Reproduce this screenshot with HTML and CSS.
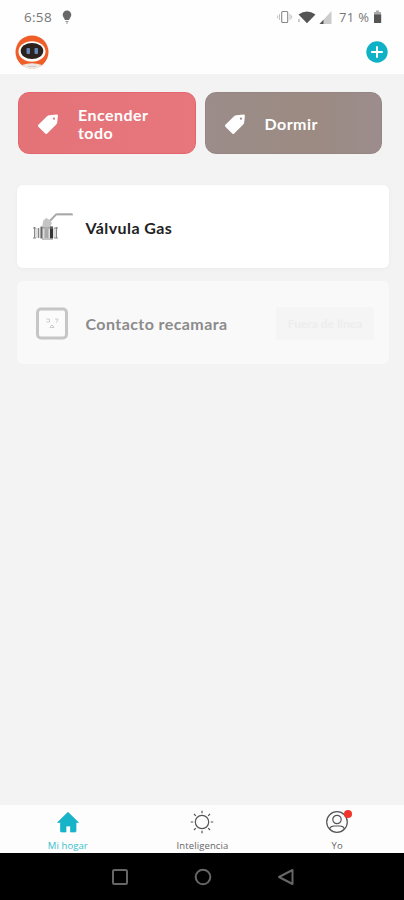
FILE: index.html
```
<!DOCTYPE html>
<html lang="es">
<head>
<meta charset="utf-8">
<meta name="viewport" content="width=device-width, initial-scale=1">
<title>Mi hogar</title>
<link rel="stylesheet" href="styles.css">
</head>
<body>
<div class="app">
  <header class="top">
    <div class="status">
      <span class="clock">6:58</span>
      <svg class="bulb" width="10" height="15" viewBox="0 0 10 15"><path d="M5 .5a4.300 4.300 0 0 1 4.300 4.300C9.300 7 7.500 8.300 7.100 10H2.900C2.500 8.300.7 7 .7 4.800A4.300 4.300 0 0 1 5 .5z" fill="#686868"/><path d="M3.500 11.500h3M4 13h2" stroke="#999"/></svg>
      <svg class="signals" width="56" height="16" viewBox="0 0 56 16">
        <rect x="4.700" y="2.500" width="6" height="11" rx="1" fill="none" stroke="#888" stroke-width="1.100"/>
        <path d="M2.500 5v6M.7 6.500v3M13 5v6M14.600 6.500v3" stroke="#bbb" stroke-width=".9"/>
        <path d="M21.500 5.500Q30 -.5 38.500 5.500L30 14.200z" fill="#555"/>
        <path d="M22 10v3" stroke="#999"/>
        <path d="M54.500 2v13h-12z" fill="#ccc"/><path d="M46.500 10.700V15h-4z" fill="#555"/>
      </svg>
      <span class="percent">71 %</span>
      <svg class="battery" width="9" height="14" viewBox="0 0 9 14"><path d="M3 .5h3V2h2v3H1V2h2z" fill="#aaa"/><path d="M1 4.500h7.200V13H1z" fill="#555"/></svg>
    </div>
    <div class="bar">
      <svg class="avatar" width="34" height="34" viewBox="0 0 34 34">
        <circle cx="17" cy="17" r="16.500" fill="#ef5d28"/>
        <path d="M7 30Q17 26.500 27 30Q23 34 17 34Q11 34 7 30z" fill="#eee5df"/>
        <ellipse cx="17" cy="16.500" rx="13.500" ry="10.300" fill="#fff"/>
        <ellipse cx="17" cy="16" rx="11.300" ry="8" fill="#2b211d"/>
        <rect x="11.500" y="13" width="3.500" height="6" rx="1" fill="#6687b5"/><rect x="19.500" y="13" width="3.500" height="6" rx="1" fill="#6687b5"/>
        <path d="M13 31.500h8" stroke="#ccc"/>
      </svg>
      <svg class="add" width="22" height="22" viewBox="0 0 22 22"><circle cx="11" cy="11" r="10.700" fill="#0eb1c6"/><path d="M11 5.200v11.600M5.200 11h11.600" stroke="#fff" stroke-width="1.900"/></svg>
    </div>
  </header>
  <main class="content">
    <section class="scenes">
      <div class="scene red">
        <svg class="tag" width="22" height="21" viewBox="0 0 22 21"><path d="M1.400 10.800L10 2.300Q11 1.300 12.500 1.200L19.500.6Q21 .5 20.900 2L20.200 8.200Q20 9.700 19 10.800L10.200 19.400Q9.200 20.400 8.200 19.400L1.400 12.800Q.4 11.800 1.400 10.800z" fill="#fff"/><circle cx="17" cy="4.700" r="1.100" fill="#df777b"/></svg>
        <span>Encender<br>todo</span>
      </div>
      <div class="scene brown">
        <svg class="tag" width="22" height="21" viewBox="0 0 22 21"><path d="M1.400 10.800L10 2.300Q11 1.300 12.500 1.200L19.500.6Q21 .5 20.900 2L20.200 8.200Q20 9.700 19 10.800L10.200 19.400Q9.200 20.400 8.200 19.400L1.400 12.800Q.4 11.800 1.400 10.800z" fill="#fff"/><circle cx="17" cy="4.700" r="1.100" fill="#9c8b89"/></svg>
        <span>Dormir</span>
      </div>
    </section>
    <section class="devices">
      <article class="device">
        <svg class="picture" width="44" height="34" viewBox="0 0 44 34">
          <path d="M17 12L25 3.500H42" fill="none" stroke="#bbb" stroke-width="2.200"/><path d="M17.500 11L25.500 3H41" fill="none" stroke="#888" stroke-width=".7"/>
          <path d="M12 10l3-3 4 2 2 3-3 6h-7z" fill="#c4c4c4"/>
          <rect x="3" y="17" width="23" height="10" fill="#ddd"/>
          <path d="M3.500 16v11M7.500 17v10M25.500 16v11" stroke="#888"/>
          <path d="M10.500 15.500v12" stroke="#666" stroke-width="2"/><path d="M20.500 15.500v12" stroke="#333" stroke-width="3"/>
          <path d="M11 17h11M11 28h11M2 17h3M2 27h3M23 17h4M23 27h4" stroke="#888"/>
          <path d="M13.500 18h4v9h-4z" fill="#aaa"/>
        </svg>
        <span class="name">Válvula Gas</span>
      </article>
      <article class="device offline">
        <svg class="picture" width="44" height="34" viewBox="0 0 44 34">
          <rect x="6.500" y="2" width="29" height="29" rx="3.500" fill="#fbfbfb" stroke="#c6c6c6" stroke-width="3"/>
          <g fill="none" stroke="#ccc"><path d="M15.500 12h3v3h-3M24 12h3l-1.500 3.500M19 20.500q2-4.500 4 0z"/></g>
        </svg>
        <span class="name">Contacto recamara</span>
        <span class="badge">Fuera de línea</span>
      </article>
    </section>
  </main>
  <nav class="tabs">
    <div class="tab active">
      <svg width="24" height="24" viewBox="0 0 24 24"><path d="M12 2.300L22.500 12.500H20V21Q20 22 19 22H14.500V16H10V22H5.500Q4.500 22 4.500 21V12.500H1.500z" fill="#16b3c9" stroke="#16b3c9" stroke-width=".7" stroke-linejoin="round"/></svg>
      <span>Mi hogar</span>
    </div>
    <div class="tab">
      <svg width="24" height="24" viewBox="0 0 24 24" fill="none" stroke="#555" stroke-width="1.200"><circle cx="12" cy="12" r="6.700"/><path d="M12 .7v2.500M12 20.800v2.500M.7 12h2.500M20.800 12h2.500M4 4l1.800 1.800M18.200 18.200L20 20M4 20l1.800-1.800M18.200 5.800L20 4"/></svg>
      <span>Inteligencia</span>
    </div>
    <div class="tab">
      <svg width="24" height="24" viewBox="0 0 24 24" fill="none" stroke="#555" stroke-width="1.200"><circle cx="12" cy="12" r="10.300"/><circle cx="12" cy="9.500" r="4.200"/><path d="M4.500 19Q5.500 16 9 16h6q3.500 0 4.500 3"/></svg>
      <i class="dot"></i>
      <span>Yo</span>
    </div>
  </nav>
  <footer class="system">
    <svg width="18" height="18" viewBox="0 0 18 18"><rect x="2" y="2" width="14" height="14" rx="1.500"/></svg>
    <svg width="18" height="18" viewBox="0 0 18 18"><circle cx="9" cy="9" r="7.300"/></svg>
    <svg width="18" height="18" viewBox="0 0 18 18"><path d="M15.500 2v14L2 9z"/></svg>
  </footer>
</div>
</body>
</html>
```
FILE: styles.css
```
* { box-sizing: border-box; }
body { margin: 0; font-family: Lato, "Open Sans", sans-serif; color: #222; }
svg { display: block; flex: none; }
.app { width: 404px; height: 900px; display: flex; flex-direction: column; background: #f3f3f3; overflow: hidden; }
.top { height: 74px; background: #fefefe; flex: none; }
.status { height: 34px; display: flex; align-items: center; padding: 0 22px 0 24px; font: 13.5px/34px "Open Sans", sans-serif; color: #777; white-space: nowrap; }
.clock { width: 28px; letter-spacing: .3px; }
.bulb { margin-left: 10px; }
.signals { margin-left: auto; }
.percent { width: 33px; margin-left: 6px; font-size: 13px; letter-spacing: .3px; }
.battery { margin-left: 1px; }
.bar { display: flex; justify-content: space-between; align-items: center; height: 36px; padding: 0 16px 0 15px; }
.content { flex: 1; padding: 18px 15px 0 17px; }
.scenes { display: flex; gap: 9px; height: 62px; padding-left: 1px; }
.scene { width: 177.5px; border-radius: 11px; display: flex; align-items: center; padding: 1px 0 0 18px; color: #fff; font-size: 16px; line-height: 18px; font-weight: 700; letter-spacing: .45px; }
.scene .tag { margin-right: 19px; margin-top: 1px; }
.red { background: linear-gradient(90deg, #e47378, #e7777d); border: 1px solid #e4666c; }
.brown { background: linear-gradient(90deg, #9c8c8a, #9b8b82 60%, #9c8c8d); border: 1px solid #958684; }
.devices { display: flex; flex-direction: column; gap: 13px; margin-top: 31px; }
.device { height: 83px; border-radius: 6px; background: #fff; box-shadow: 0 1px 5px #00000009; display: flex; align-items: center; padding: 2px 15px 0 14px; }
.name { margin-left: 10.5px; font-size: 16px; font-weight: 700; letter-spacing: .42px; }
.offline { background: #f9f9f9; box-shadow: none; }
.offline .name { color: #8b8b8b; }
.badge { width: 98px; height: 33px; margin-left: auto; border-radius: 3px; background: #f5f5f5; color: #ededed; font-size: 12px; font-weight: 700; line-height: 33px; text-align: center; }
.tabs { height: 48px; flex: none; background: #fdfdfd; display: grid; grid-template-columns: repeat(3, 1fr); }
.tab { position: relative; display: flex; flex-direction: column; align-items: center; padding: 5px 0 0 1px; font: 9.5px/13px "Open Sans", sans-serif; color: #666; }
.tab span { margin-top: 4.500px; letter-spacing: .1px; }
.tab.active { color: #35bdcc; }
.dot { position: absolute; left: calc(50% + 7px); top: 5px; width: 8px; height: 8px; border-radius: 50%; background: #f4332b; }
.system { height: 47px; flex: none; background: #000; display: flex; justify-content: center; align-items: center; gap: 65px; padding-left: 1px; }
.system svg { fill: none; stroke: #666; stroke-width: 2; stroke-linejoin: round; }
```
